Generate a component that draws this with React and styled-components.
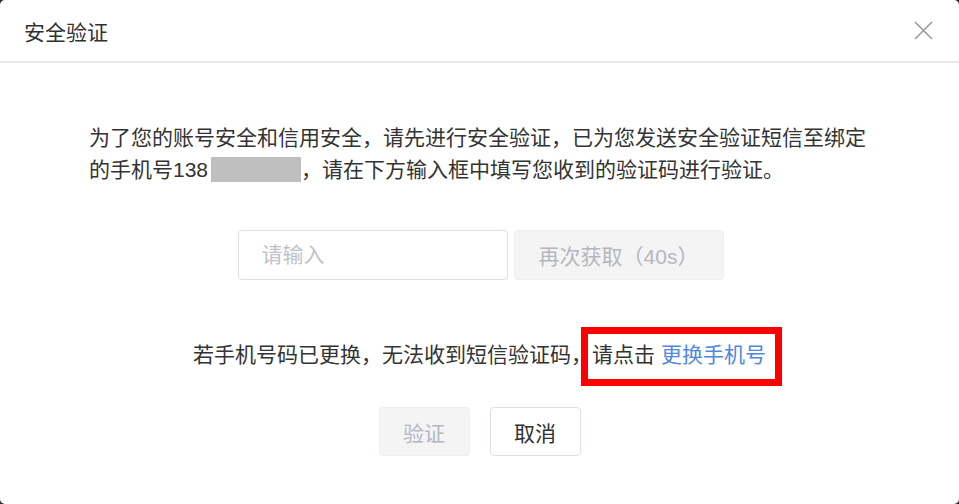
import React from "react";
import styled, { createGlobalStyle } from "styled-components";

const GlobalStyle = createGlobalStyle`
  html, body {
    margin: 0;
    padding: 0;
    background: #2b2b2b;
  }
  body {
    font-family: "Liberation Sans", "Noto Sans CJK SC", sans-serif;
    color: #333;
  }
`;

const Dialog = styled.div`
  width: 959px;
  height: 504px;
  background: #fff;
  border-radius: 5px;
  overflow: hidden;
  display: flex;
  flex-direction: column;
`;

const Header = styled.div`
  height: 61px;
  border-bottom: 2px solid #e8e8e8;
  display: flex;
  align-items: center;
  justify-content: space-between;
  padding: 0 24px;
`;

const Title = styled.h2`
  margin: 0;
  font-size: 21px;
  font-weight: normal;
  color: #303133;
`;

const CloseBtn = styled.button`
  border: 0;
  background: none;
  padding: 0;
  width: 20px;
  height: 20px;
  display: flex;
  align-items: center;
  justify-content: center;
  cursor: pointer;
  margin-right: 2px;
`;

const Body = styled.div`
  display: flex;
  flex-direction: column;
  align-items: center;
  padding-top: 59px;
`;

const Notice = styled.p`
  margin: 0;
  align-self: stretch;
  padding: 0 89px;
  font-size: 21px;
  line-height: 32px;
  color: #333;
`;

const Masked = styled.span`
  display: inline-block;
  width: 90px;
  height: 25px;
  margin-left: 3px;
  background: #bfbfbf;
  vertical-align: -5px;
`;

const CodeRow = styled.div`
  margin-top: 44px;
  display: flex;
  gap: 6px;
  margin-left: 2px;
`;

const CodeInput = styled.input`
  box-sizing: border-box;
  width: 270px;
  height: 50px;
  border: 1px solid #dcdfe6;
  border-radius: 4px;
  padding: 0 23px;
  font-size: 21px;
  font-family: inherit;
  color: #333;
  outline: none;
  &::placeholder {
    color: #bfc2c8;
  }
`;

const Button = styled.button`
  box-sizing: border-box;
  height: ${(p) => p.$h || 50}px;
  width: ${(p) => p.$w}px;
  border-radius: 4px;
  font-size: 21px;
  font-family: inherit;
  padding: 0;
  border: 1px solid ${(p) => (p.disabled ? "#ebeef5" : "#dcdfe6")};
  background: ${(p) => (p.disabled ? "#f4f4f5" : "#fff")};
  color: ${(p) => (p.disabled ? "#b4b7bd" : "#303133")};
  cursor: ${(p) => (p.disabled ? "not-allowed" : "pointer")};
`;

const Hint = styled.p`
  margin: 59px 0 0;
  font-size: 21px;
  line-height: 32px;
  color: #333;
  text-align: center;
`;

const Marked = styled.span`
  position: relative;
  display: inline-block;
  line-height: 32px;
  &::after {
    content: "";
    position: absolute;
    left: -11px;
    right: -16px;
    top: -12px;
    bottom: -15px;
    border: 7px solid #ff0000;
    pointer-events: none;
  }
`;

const Link = styled.a`
  color: #4f88de;
  text-decoration: none;
  cursor: pointer;
`;

const Actions = styled.div`
  margin-top: 36px;
  display: flex;
  gap: 20px;
`;

const CloseIcon = () => (
  <svg width="19" height="19" viewBox="0 0 19 19">
    <path d="M1 1 L18 18 M18 1 L1 18" stroke="#999" strokeWidth="1.6" fill="none" />
  </svg>
);

export default function App() {
  return (
    <>
      <GlobalStyle />
      <Dialog>
        <Header>
          <Title>安全验证</Title>
          <CloseBtn aria-label="关闭">
            <CloseIcon />
          </CloseBtn>
        </Header>
        <Body>
          <Notice>
            为了您的账号安全和信用安全，请先进行安全验证，已为您发送安全验证短信至绑定的手机号138
            <Masked />
            ，请在下方输入框中填写您收到的验证码进行验证。
          </Notice>
          <CodeRow>
            <CodeInput placeholder="请输入" />
            <Button disabled $w={210}>
              再次获取（40s）
            </Button>
          </CodeRow>
          <Hint>
            若手机号码已更换，无法收到短信验证码，
            <Marked>
              请点击 <Link>更换手机号</Link>
            </Marked>
          </Hint>
          <Actions>
            <Button disabled $w={91} $h={49}>
              验证
            </Button>
            <Button $w={91} $h={49}>
              取消
            </Button>
          </Actions>
        </Body>
      </Dialog>
    </>
  );
}
